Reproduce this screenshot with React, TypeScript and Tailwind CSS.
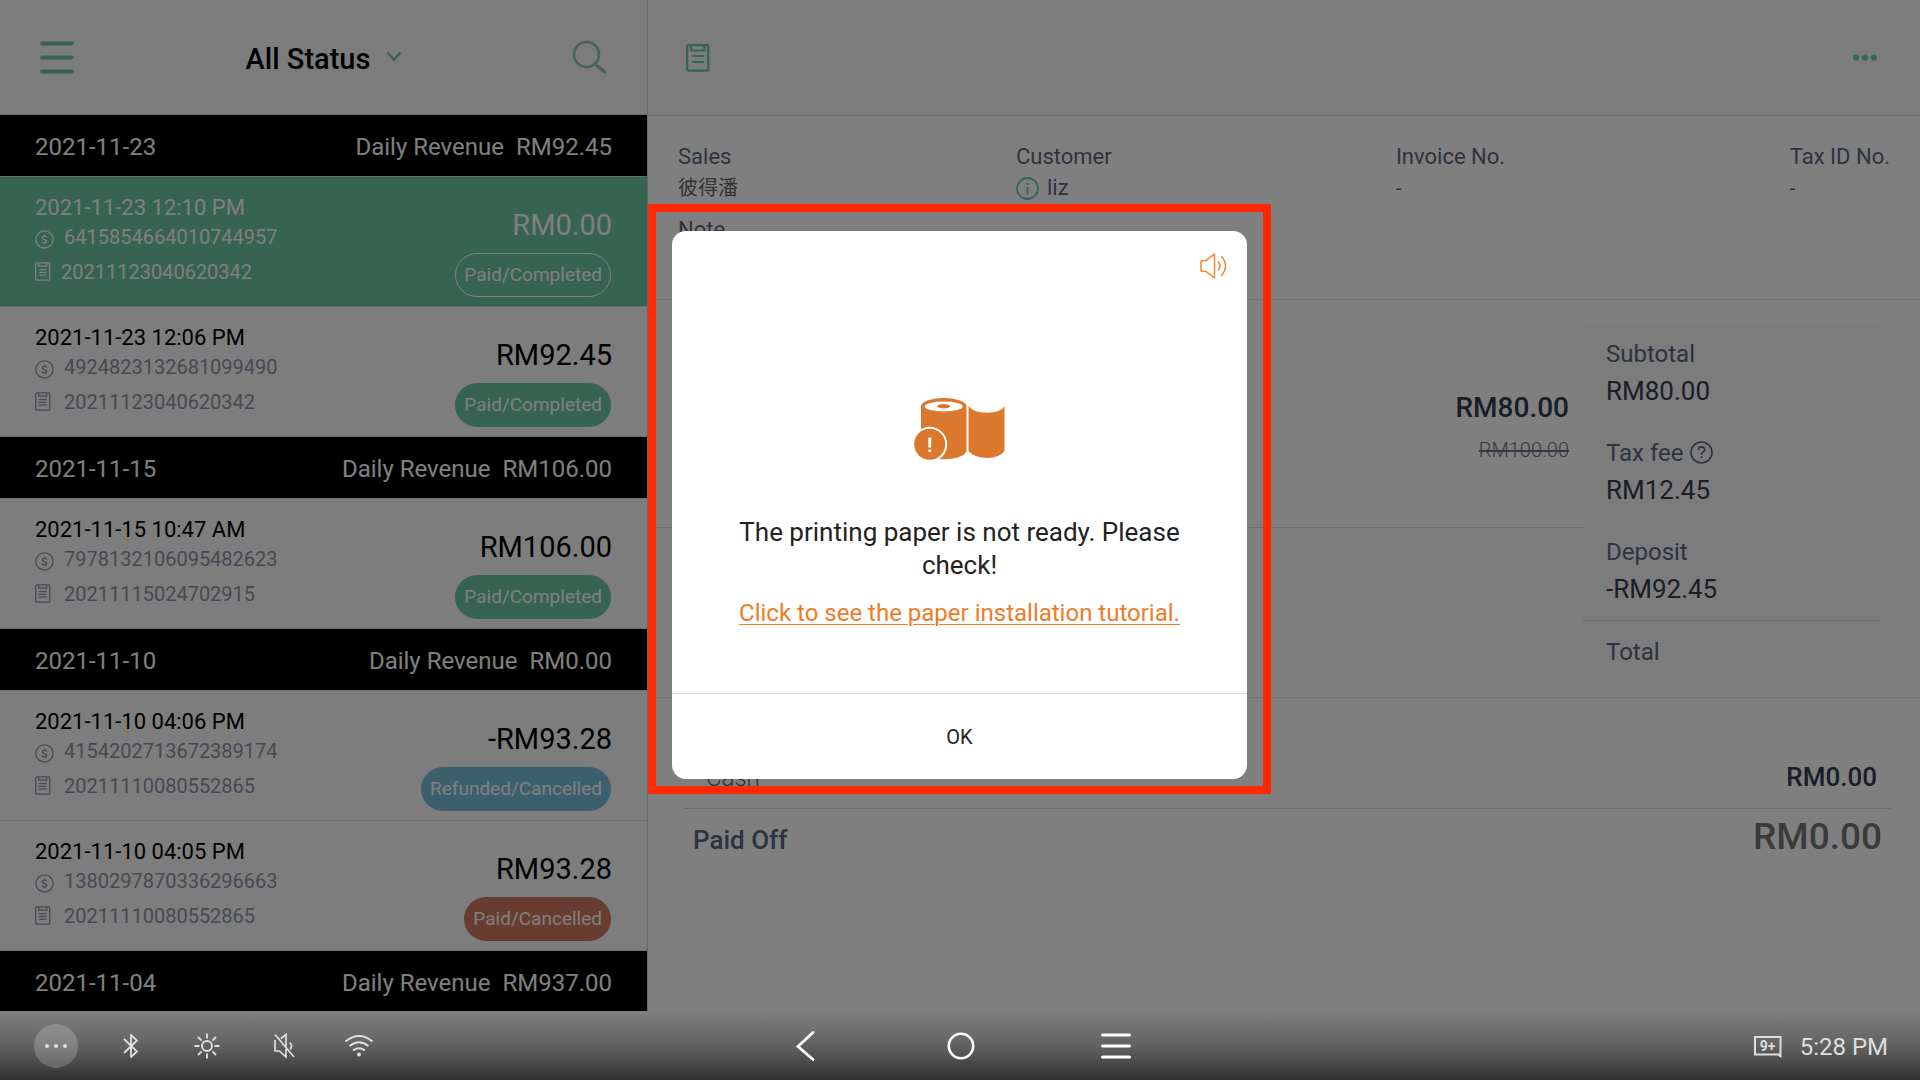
import { useState } from "react";

type Order = {
  time: string;
  serial: string;
  invoice: string;
  amount: string;
  status: string;
  tone: string;
  active?: boolean;
};

type Day = {
  date: string;
  revenue: string;
  orders: Order[];
};

const days: Day[] = [
  {
    date: "2021-11-23",
    revenue: "RM92.45",
    orders: [
      {
        time: "2021-11-23 12:10 PM",
        serial: "6415854664010744957",
        invoice: "20211123040620342",
        amount: "RM0.00",
        status: "Paid/Completed",
        tone: "border-white",
        active: true,
      },
      {
        time: "2021-11-23 12:06 PM",
        serial: "4924823132681099490",
        invoice: "20211123040620342",
        amount: "RM92.45",
        status: "Paid/Completed",
        tone: "border-transparent bg-[#6cc6a4]",
      },
    ],
  },
  {
    date: "2021-11-15",
    revenue: "RM106.00",
    orders: [
      {
        time: "2021-11-15 10:47 AM",
        serial: "7978132106095482623",
        invoice: "20211115024702915",
        amount: "RM106.00",
        status: "Paid/Completed",
        tone: "border-transparent bg-[#6cc6a4]",
      },
    ],
  },
  {
    date: "2021-11-10",
    revenue: "RM0.00",
    orders: [
      {
        time: "2021-11-10 04:06 PM",
        serial: "4154202713672389174",
        invoice: "20211110080552865",
        amount: "-RM93.28",
        status: "Refunded/Cancelled",
        tone: "border-transparent bg-[#78bedc]",
      },
      {
        time: "2021-11-10 04:05 PM",
        serial: "1380297870336296663",
        invoice: "20211110080552865",
        amount: "RM93.28",
        status: "Paid/Cancelled",
        tone: "border-transparent bg-[#d07860]",
      },
    ],
  },
  { date: "2021-11-04", revenue: "RM937.00", orders: [] },
];

const summary = [
  { label: "Subtotal", value: "RM80.00" },
  { label: "Tax fee", value: "RM12.45", help: true },
  { label: "Deposit", value: "-RM92.45" },
];

function CoinIcon() {
  return (
    <svg className="h-[23px] w-[19px]" viewBox="0 -4 19 23" fill="none" stroke="currentColor" strokeWidth="1.3">
      <circle cx="9.5" cy="9.5" r="8.6" />
      <path d="M11.7 7.5C11.4 6.6 10.6 6.2 9.5 6.2c-1.2 0-2.1.6-2.1 1.6 0 2.3 4.3 1.2 4.3 3.5 0 1-.9 1.6-2.2 1.6-1.2 0-2-.5-2.3-1.4M9.5 4.8v1.4M9.5 12.9v1.4" />
    </svg>
  );
}

function NoteIcon() {
  return (
    <svg className="h-[19px] w-4" viewBox="0 0 16 19" fill="none" stroke="currentColor" strokeWidth="1.3">
      <rect x="0.7" y="0.8" width="14" height="17.4" rx="1" />
      <path d="M3.7 1v3.2h8V1M4 7.7h7.5M4 10.4h7.5M4 13.1h7.5" />
    </svg>
  );
}

function OrderRow({ order }: { order: Order }) {
  const muted = order.active ? "text-white" : "text-[#8c94a8]";
  return (
    <li
      className={`flex h-[130px] items-start justify-between border-b border-[#dcdcdc] px-[35px] ${
        order.active ? "bg-[#6cc6a4] text-white" : "bg-[#fafafa] text-black"
      }`}
    >
      <div className="pt-[17px]">
        <p className="text-[22px] leading-7">{order.time}</p>
        <p className={`flex h-[30px] items-center gap-[10px] text-[20px] ${muted}`}>
          <CoinIcon />
          {order.serial}
        </p>
        <p className={`mt-1 flex h-[31px] items-center text-[20px] ${muted} ${order.active ? "gap-[10px]" : "gap-[13px]"}`}>
          <NoteIcon />
          {order.invoice}
        </p>
      </div>
      <div className="flex flex-col items-end pt-7">
        <p className="text-[29px] leading-10">{order.amount}</p>
        <span
          className={`mr-px mt-2 flex h-11 items-center rounded-full border px-2 text-[19px] text-white ${order.tone}`}
        >
          {order.status}
        </span>
      </div>
    </li>
  );
}

function Sidebar() {
  return (
    <aside className="flex w-[33.75%] flex-col border-r border-[#d0d0d0] bg-[#fafafa]">
      <header className="flex h-[115px] shrink-0 items-center justify-between border-b border-[#dcdcdc] bg-[#f8f8f8] px-10">
        <button aria-label="Menu" className="text-[#6cc6a4]">
          <svg className="h-9 w-[34px]" viewBox="0 0 34 36" stroke="currentColor" strokeWidth="4.2" strokeLinecap="round">
            <path d="M2.200 4.500h29.600M2.200 18.500h29.600M2.200 32.500h29.600" />
          </svg>
        </button>
        <button className="flex items-center gap-4 pl-0.5 pt-[5px] text-[29px] font-medium text-black">
          All Status
          <svg className="mb-1.5 h-3 w-4 text-[#6cc6a4]" viewBox="0 0 16 12" fill="none" stroke="currentColor" strokeWidth="2.5">
            <path d="M1.500 1.500L8 8.800l6.500-7.300" />
          </svg>
        </button>
        <button aria-label="Search" className="text-[#8cc8b2]">
          <svg className="h-[34px] w-[35px]" viewBox="0 0 35 34" fill="none" stroke="currentColor" strokeWidth="2.6" strokeLinecap="round">
            <circle cx="14.5" cy="14.5" r="12.5" />
            <path d="M23 24l9.500 8" strokeWidth="3.5" />
          </svg>
        </button>
      </header>
      {days.map((day) => (
        <section key={day.date}>
          <h2 className="flex h-[62px] items-center justify-between border-b border-[#dcdcdc] bg-black px-[35px] pt-[3px] text-[24px] text-white">
            <span>{day.date}</span>
            <span className="flex gap-3">
              <span>Daily Revenue</span>
              <span>{day.revenue}</span>
            </span>
          </h2>
          <ul>
            {day.orders.map((order) => (
              <OrderRow key={order.serial} order={order} />
            ))}
          </ul>
        </section>
      ))}
    </aside>
  );
}

function Detail() {
  return (
    <main className="flex min-w-0 flex-1 flex-col bg-white">
      <header className="flex h-[116px] shrink-0 items-center justify-between border-b border-[#d0d0d0] bg-[#f8f8f8] pl-[38px] pr-[43px] text-[#6cc6a4]">
        <button aria-label="Order note">
          <svg className="h-[28px] w-6" viewBox="0 0 24 28" fill="none" stroke="currentColor" strokeWidth="2.2">
            <rect x="1.2" y="1.2" width="21" height="25.5" rx="1" />
            <path d="M5 1.500v5h13.500v-5M6 12h12M6 18h12" />
          </svg>
        </button>
        <button aria-label="More">
          <svg className="h-2 w-6" viewBox="0 0 24 8" fill="currentColor">
            <circle cx="3.2" cy="3.5" r="3.1" />
            <circle cx="12" cy="3.5" r="3.1" />
            <circle cx="20.8" cy="3.5" r="3.1" />
          </svg>
        </button>
      </header>

      <section className="h-[184px] shrink-0 border-b border-[#eaeaea] px-[30px] pt-[25px] text-[#5c6680]">
        <dl className="grid grid-cols-[338fr_380fr_394fr_auto] text-[22px]">
          <div>
            <dt className="leading-8">Sales</dt>
            <dd className="text-[20px] leading-[30px] text-[#666]">彼得潘</dd>
          </div>
          <div>
            <dt className="leading-8">Customer</dt>
            <dd className="flex items-center gap-2 leading-[30px]">
              <svg className="size-[23px] text-[#6cc6a4]" viewBox="0 0 23 23" fill="none" stroke="currentColor" strokeWidth="1.8">
                <circle cx="11.5" cy="11.5" r="10.5" />
                <path d="M11.500 10v7.500M11.500 5.700v2.300" />
              </svg>
              liz
            </dd>
          </div>
          <div>
            <dt className="leading-8">Invoice No.</dt>
            <dd className="text-[20px] leading-[30px] text-[#666]">-</dd>
          </div>
          <div>
            <dt className="leading-8">Tax ID No.</dt>
            <dd className="text-[20px] leading-[30px] text-[#666]">-</dd>
          </div>
        </dl>
        <p className="mt-[11px] text-[22px] leading-8">Note</p>
      </section>

      <section className="flex h-[398px] shrink-0 border-b border-[#eaeaea] pr-10">
        <div className="flex-1">
          <div className="flex h-[228px] flex-col items-end border-b border-[#d8d8d8] pr-[14px] pt-[90px]">
            <p className="text-[28px] font-medium leading-9 text-[#363c4c]">RM80.00</p>
            <p className="mt-[10px] text-[20px] font-light leading-7 text-[#6c7488] line-through">RM100.00</p>
          </div>
        </div>
        <dl className="mt-[23px] h-[350px] w-[297px] rounded-lg bg-[#f9f9f9] pt-3 text-[24px] text-[#5c6680]">
          {summary.map((row) => (
            <div key={row.label} className="mb-6 px-[23px]">
              <dt className="flex h-[37px] items-center gap-[7px]">
                {row.label}
                {row.help && (
                  <svg className="size-[23px]" viewBox="0 0 23 23" fill="none" stroke="currentColor" strokeWidth="1.6">
                    <circle cx="11.5" cy="11.5" r="10.5" />
                    <path d="M8.300 9c0-2 1.400-3.100 3.200-3.100s3.200 1.100 3.200 2.800c0 2.100-3.200 2.500-3.200 5M11.500 15.300v2" />
                  </svg>
                )}
              </dt>
              <dd className="flex h-[38px] items-center text-[26px] text-[#363c4c]">{row.value}</dd>
            </div>
          ))}
          <div className="-mt-3 border-t border-[#d4d7e0] px-[23px] pt-3">
            <dt className="flex h-[38px] items-center">Total</dt>
          </div>
        </dl>
      </section>

      <section className="px-[30px] pt-14 font-medium text-[#5c6680]">
        <div className="-mr-px ml-[6px] flex h-[55px] items-start justify-between border-b border-[#d0d4e0] pl-[22px] pr-[14px] leading-[46px]">
          <span className="text-[24px] font-light leading-[48px]">Cash</span>
          <span className="text-[26px] text-[#363c4c]">RM0.00</span>
        </div>
        <div className="flex items-start justify-between pl-[15px] pr-2">
          <span className="text-[26px] leading-[62px]">Paid Off</span>
          <span className="text-[37px] leading-[55px] text-[#767676]">RM0.00</span>
        </div>
      </section>
    </main>
  );
}

function PaperDialog({ onClose }: { onClose: () => void }) {
  return (
    <div className="absolute inset-0 flex items-center justify-center bg-black/50 pb-0.5 pr-px">
      <div role="dialog" aria-modal="true" className="relative flex h-[548px] w-[575px] flex-col rounded-[14px] bg-white">
        <div className="pointer-events-none absolute -inset-x-6 -bottom-[15px] -top-[27px] border-8 border-[#ff2a04]" />
        <button aria-label="Read aloud" className="mr-5 mt-[21px] self-end text-[#ee8a3c]">
          <svg className="h-7 w-[27px]" viewBox="0 0 27 28" fill="none" stroke="currentColor" strokeWidth="1.5" strokeLinejoin="round">
            <path d="M1 9.500q0-.8.800-.8h4L14.500 2v24l-8.700-6.700h-4q-.8 0-.8-.8zM18 9.500q4 4.500 0 9M21.200 4q8.600 10 0 20" />
          </svg>
        </button>
        <div className="flex flex-1 flex-col items-center px-14 pt-[117px] text-center">
          <svg className="h-16 w-[92px]" viewBox="0 0 92 64" fill="#dc782d">
            <path d="M7 9v43.500A22.800 9 0 0 0 52.500 54V9A22.800 8.500 0 0 0 7 9z" />
            <ellipse cx="29.7" cy="9.5" rx="19" ry="5" fill="#fff" />
            <ellipse cx="29.7" cy="9.3" rx="6.5" ry="2.2" />
            <path d="M54.500 9q4.500 6.700 18.500 6.700T90.500 9v45q-5 7-17.500 7t-18.500-7z" />
            <circle cx="15.7" cy="47.3" r="17.5" fill="#fff" />
            <circle cx="15.7" cy="47.3" r="15.5" />
            <path d="M14.400 40.500h2.800v10h-2.800zM14.400 52.500h2.800v2.600h-2.800z" fill="#fff" />
          </svg>
          <p className="mt-[55px] text-[26px] leading-[33px] text-[#222]">
            The printing paper is not ready. Please check!
          </p>
          <a href="#tutorial" className="mt-[15px] text-[24px] leading-8 text-[#ee7c28] underline decoration-1 underline-offset-3">
            Click to see the paper installation tutorial.
          </a>
        </div>
        <button onClick={onClose} className="h-[86px] border-t border-[#dcdcdc] pt-0.5 text-[20px] text-[#222]">
          OK
        </button>
      </div>
    </div>
  );
}

function SystemBar() {
  return (
    <nav className="flex h-[69px] shrink-0 items-center justify-between bg-linear-to-b from-[#808080] via-[#626262] to-[#323232] pl-[34px] pr-8 text-[#dedede]">
      <div className="flex flex-1 items-center">
        <button aria-label="More" className="flex size-11 items-center justify-center rounded-full bg-white/20">
          <svg className="h-1 w-[22px]" viewBox="0 0 22 4" fill="currentColor">
            <circle cx="2" cy="2" r="2" />
            <circle cx="11" cy="2" r="2" />
            <circle cx="20" cy="2" r="2" />
          </svg>
        </button>
        <button aria-label="Bluetooth" className="ml-[45px]">
          <svg className="h-6 w-4" viewBox="0 0 16 24" fill="none" stroke="currentColor" strokeWidth="1.8">
            <path d="M1 5l13 12.500-6 5.500V1l6 5.500L1 19" />
          </svg>
        </button>
        <button aria-label="Brightness" className="ml-[55px]">
          <svg className="size-[26px]" viewBox="0 0 26 26" fill="none" stroke="currentColor" strokeWidth="1.9">
            <circle cx="13" cy="13" r="5" />
            <path d="M13 .5v5M13 20.500v5M.5 13h5M20.500 13h5M4 4l3.600 3.600M18.400 18.400L22 22M4 22l3.600-3.600M18.400 7.600L22 4" />
          </svg>
        </button>
        <button aria-label="Muted" className="ml-[53px]">
          <svg className="h-[26px] w-[22px]" viewBox="0 0 22 26" fill="none" stroke="currentColor" strokeWidth="1.7">
            <path d="M2 7v11h4.500l6.500 6v-8M8 5.500l5-4v12M2 1.500l19 22.500M17 9.500q3 3.500 0 7" />
          </svg>
        </button>
        <button aria-label="Wi-Fi" className="ml-[49px]">
          <svg className="h-[23px] w-[30px]" viewBox="0 0 30 23" fill="none" stroke="currentColor" strokeWidth="2">
            <path d="M1.500 7.500Q15-3.500 28.500 7.500M5.500 12Q15 4.500 24.500 12M9 16.500q6-4.500 12 0" />
            <circle cx="15" cy="20.5" r="2" fill="currentColor" stroke="none" />
          </svg>
        </button>
      </div>
      <div className="flex items-center gap-[126px] text-white">
        <button aria-label="Back">
          <svg className="h-8 w-[30px]" viewBox="0 0 30 32" fill="none" stroke="currentColor" strokeWidth="2.8" strokeLinecap="round">
            <path d="M22 2.500L7 16.500l15 13" />
          </svg>
        </button>
        <button aria-label="Home">
          <svg className="size-7" viewBox="0 0 28 28" fill="none" stroke="currentColor" strokeWidth="2.6">
            <circle cx="14" cy="14" r="12.2" />
          </svg>
        </button>
        <button aria-label="Recent apps">
          <svg className="h-7 w-[30px]" viewBox="0 0 30 28" stroke="currentColor" strokeWidth="3" strokeLinecap="round">
            <path d="M1.500 3h27M1.500 14h27M1.500 25h27" />
          </svg>
        </button>
      </div>
      <div className="flex flex-1 items-center justify-end gap-[18px] pt-0.5">
        <svg className="h-[22px] w-7" viewBox="0 0 28 22" fill="currentColor">
          <path d="M0 0h27.500v22l-4-2.500H0zM2 2v15.500h23.500V2z" fillRule="evenodd" />
          <text x="13.5" y="15" fontSize="14" fontWeight="700" textAnchor="middle">
            9+
          </text>
        </svg>
        <time className="text-[24px]">5:28 PM</time>
      </div>
    </nav>
  );
}

export default function App() {
  const [open, setOpen] = useState(true);

  return (
    <div className="flex h-screen flex-col font-[Roboto,'Noto_Sans_CJK_SC',sans-serif]">
      <div className="relative flex min-h-0 flex-1 overflow-hidden">
        <Sidebar />
        <Detail />
        {open && <PaperDialog onClose={() => setOpen(false)} />}
      </div>
      <SystemBar />
    </div>
  );
}
